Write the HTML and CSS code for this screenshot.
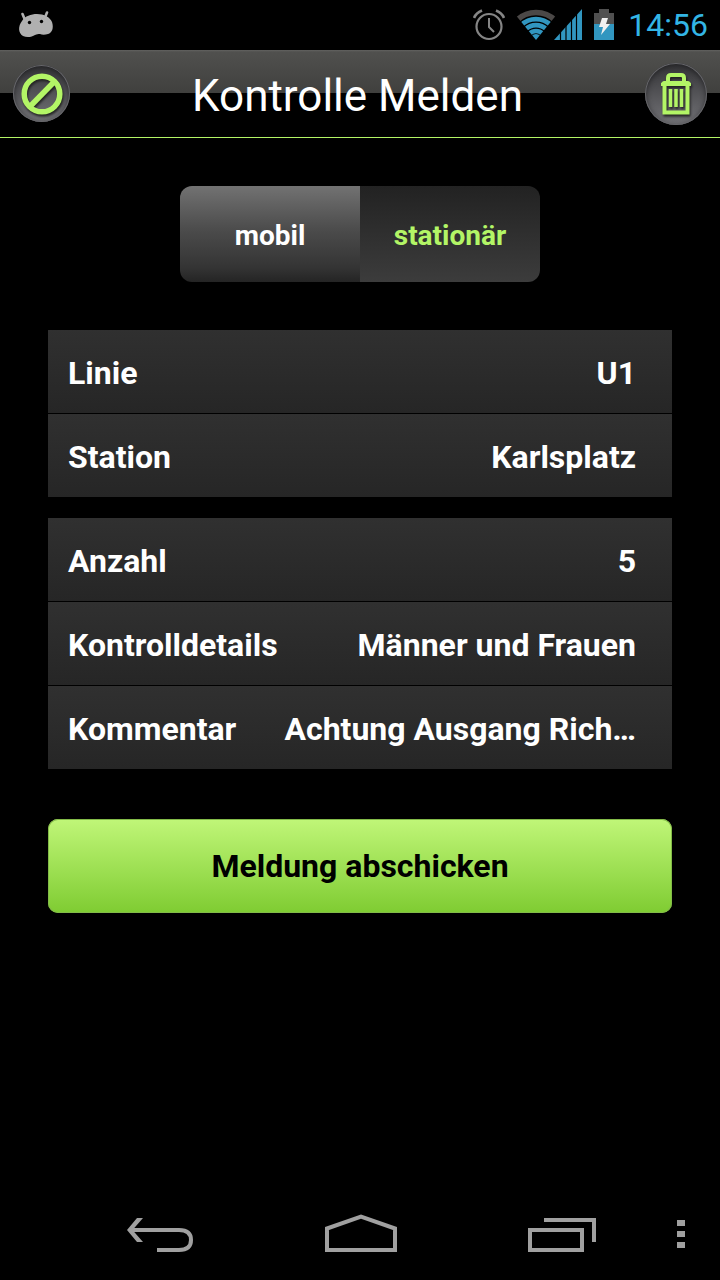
FILE: index.html
```html
<!DOCTYPE html>
<html lang="de">
<head>
<meta charset="utf-8">
<meta name="viewport" content="width=device-width, initial-scale=1">
<title>Kontrolle Melden</title>
<link rel="stylesheet" href="styles.css">
</head>
<body>
<div class="status">
  <svg class="droid" width="36" height="28" viewBox="0 0 36 28" aria-hidden="true">
    <path d="M4.500 3l2.500 6M29 1.500l-2 5" stroke="#b0b0b0" stroke-width="2.600" stroke-linecap="round"/>
    <path d="M4 10C7 5 13 3 19 3c7 0 13 3 15 8 2 6 0 11-4 12-3 1-6 1-8 0-2 0-3 0-5 1-3 2-8 3-12 1-5-3-5-10-1-15z" fill="#b0b0b0"/>
    <circle cx="11.500" cy="11.500" r="1.700"/><circle cx="23.500" cy="10.500" r="1.700"/>
  </svg>
  <div class="status-right">
    <svg class="alarm" width="32" height="32" viewBox="0 0 32 32" fill="none" stroke="#858585" aria-hidden="true">
      <circle cx="16" cy="17.500" r="12.500" stroke-width="2.200"/>
      <path d="M16 9v9l5 5" stroke-width="2"/>
      <path d="M1 9Q3 4 9 1.500M31 9Q29 4 23 1.500" stroke-width="2.600"/>
    </svg>
    <svg class="signal" width="68" height="32" viewBox="0 0 68 32" aria-hidden="true">
      <clipPath id="fan"><path d="M20 31L-2 4V-4H42V4z"/></clipPath>
      <g clip-path="url(#fan)" fill="none" stroke="#3196c0" stroke-width="4.600">
        <circle cx="20" cy="31" r="27.500" stroke="#4b4847" stroke-width="5.500"/>
        <circle cx="20" cy="31" r="20.900"/>
        <circle cx="20" cy="31" r="14.900"/>
        <circle cx="20" cy="31" r="9"/>
        <circle cx="20" cy="31" r="3" stroke-width="6"/>
      </g>
      <path d="M38 31L66 0V31z" fill="#3196c0"/>
      <path d="M44.500 18v13M50 12v19M55.500 7v24M60.500 2v29" stroke="#000" stroke-width="1.200"/>
    </svg>
    <svg class="battery" width="20" height="32" viewBox="0 0 20 32" aria-hidden="true">
      <path d="M0 4h5V0h10v4h5v11H0z" fill="#505050"/>
      <path d="M0 15h20v16H0z" fill="#3196c0"/>
      <path d="M8 9h6l-2 6h4L7 26l2-8H5z" fill="#f0f0f0"/>
    </svg>
    <time>14:56</time>
  </div>
</div>

<header class="bar">
  <button class="round cancel" type="button" aria-label="Abbrechen">
    <svg width="42" height="42" viewBox="0 0 42 42" fill="none" stroke="#b3f566" stroke-width="5.500" aria-hidden="true">
      <circle cx="21" cy="21" r="17.800"/><path d="M9.500 33L32.500 9.500"/>
    </svg>
  </button>
  <h1>Kontrolle Melden</h1>
  <button class="round delete" type="button" aria-label="Löschen">
    <svg width="32" height="42" viewBox="0 0 32 42" fill="none" stroke="#b3f566" aria-hidden="true">
      <path d="M8 8V5q0-3 3-3h10q3 0 3 3v3" stroke-width="4"/>
      <path d="M1 13v-3l3-2h24l3 2v3z" fill="#b3f566" stroke="none"/>
      <path d="M4.500 10.500h23V39.500h-23z" stroke-width="4"/>
      <path d="M10.500 16v18M16 16v18M21.500 16v18" stroke-width="3.500"/>
    </svg>
  </button>
</header>

<main>
  <form class="form">
    <div class="segment" role="radiogroup" aria-label="Art der Kontrolle">
      <input type="radio" name="art" id="mobil">
      <label for="mobil">mobil</label>
      <input type="radio" name="art" id="stationaer" checked>
      <label for="stationaer">stationär</label>
    </div>
    <div class="groups">
      <div class="group">
        <button class="row" type="button"><span>Linie</span><span class="value">U1</span></button>
        <button class="row" type="button"><span>Station</span><span class="value">Karlsplatz</span></button>
      </div>
      <div class="group">
        <button class="row" type="button"><span>Anzahl</span><span class="value">5</span></button>
        <button class="row" type="button"><span>Kontrolldetails</span><span class="value">Männer und Frauen</span></button>
        <button class="row" type="button"><span>Kommentar</span><span class="value">Achtung Ausgang Rich…</span></button>
      </div>
    </div>
    <button class="submit" type="submit">Meldung abschicken</button>
  </form>
</main>

<nav class="nav" aria-label="System">
  <button type="button" aria-label="Zurück">
    <svg width="68" height="40" viewBox="0 0 68 40" fill="none" stroke="#a0a0a0" stroke-width="4" aria-hidden="true">
      <path d="M5 16H53q12 0 12 10t-12 10H31"/>
      <path d="M11 4h6L6.500 16 17 28h-6L1 16z" fill="#a0a0a0" stroke="none"/>
    </svg>
  </button>
  <button type="button" aria-label="Startseite">
    <svg width="72" height="40" viewBox="0 0 72 40" fill="none" stroke="#a0a0a0" stroke-width="4" aria-hidden="true">
      <path d="M2 36V14.500L36 2.500 70 14.500V36z"/>
    </svg>
  </button>
  <button type="button" aria-label="Letzte Apps">
    <svg width="68" height="40" viewBox="0 0 68 40" fill="none" stroke="#a0a0a0" stroke-width="4" aria-hidden="true">
      <path d="M2 16h52v20H2zM16 6h50v22"/>
    </svg>
  </button>
  <button class="more" type="button" aria-label="Menü">
    <svg width="8" height="40" viewBox="0 0 8 40" fill="#a0a0a0" aria-hidden="true">
      <path d="M0 6h8v6H0zM0 17h8v6H0zM0 28h8v6H0z"/>
    </svg>
  </button>
</nav>
</body>
</html>
```
FILE: styles.css
```css
* {
  box-sizing: border-box;
}

body {
  margin: 0;
  min-height: 100vh;
  display: flex;
  flex-direction: column;
  background: #000;
  color: #fff;
  font-family: Roboto, "Noto Sans", sans-serif;
}

button {
  margin: 0;
  padding: 0;
  border: 0;
  background: none;
  color: inherit;
  font: inherit;
  cursor: pointer;
}

svg {
  display: block;
  flex: none;
}

.status {
  height: 50px;
  padding: 0 12px 0 18px;
  display: flex;
  align-items: center;
  justify-content: space-between;
}

.status-right {
  display: flex;
  align-items: center;
}

.signal {
  margin-left: 11px;
}

.battery {
  margin: 0 14px 0 10px;
}

time {
  color: #33b5e5;
  font-size: 32px;
  line-height: 50px;
}

.bar {
  height: 88px;
  padding: 0 13px;
  display: flex;
  align-items: center;
  justify-content: space-between;
  border-bottom: 1px solid #b3f566;
  background: linear-gradient(#626260 0, #50504e 2px, #40403e 43px, #000 43px);
}

h1 {
  margin: 0;
  padding-top: 4px;
  font-size: 44px;
  line-height: 52px;
  font-weight: 400;
}

.round {
  flex: none;
  display: grid;
  place-items: center;
  border-radius: 50%;
  background: linear-gradient(#343437, #737377);
  box-shadow: inset 0 0 0 1px #66666a, inset 0 2px 6px #202022;
}

.round svg {
  filter: drop-shadow(1px 2px 1px #222);
}

.cancel {
  width: 57px;
  height: 57px;
}

.delete {
  width: 62px;
  height: 62px;
}

main {
  flex: 1;
}

.form {
  padding: 48px;
  display: flex;
  flex-direction: column;
  gap: 48px;
}

.segment {
  align-self: center;
  width: 360px;
  max-width: 100%;
  display: grid;
  grid-template-columns: 1fr 1fr;
  position: relative;
  overflow: hidden;
  border-radius: 12px;
}

.segment input {
  position: absolute;
  opacity: 0;
}

.segment label {
  padding: 34px 0 30px;
  text-align: center;
  font-size: 28px;
  line-height: 32px;
  font-weight: 700;
  background: linear-gradient(#727272, #4c4c4c 45%, #343434 85%, #242424);
  cursor: pointer;
}

.segment input:checked + label {
  color: #b3f566;
  background: linear-gradient(#222, #3c3c3c);
}

.groups {
  display: grid;
  gap: 21px;
  padding-bottom: 2px;
}

.group {
  display: grid;
  gap: 1px;
}

.row {
  min-width: 0;
  padding: 23px 36px 20px 20px;
  display: flex;
  justify-content: space-between;
  gap: 20px;
  background: linear-gradient(#303030, #262626);
  font-size: 32px;
  line-height: 40px;
  font-weight: 700;
  text-align: left;
}

.value {
  min-width: 0;
  overflow: hidden;
  text-overflow: ellipsis;
  white-space: nowrap;
}

.submit {
  padding: 27px 20px;
  border-radius: 10px;
  background: linear-gradient(#c0f678, #7fcc32);
  box-shadow: inset 0 0 0 1px #83bb48;
  color: #000;
  font-size: 32px;
  line-height: 40px;
  font-weight: 700;
}

.nav {
  height: 96px;
  padding: 4px 35px 0 126px;
  display: flex;
  align-items: center;
  justify-content: space-between;
}

.nav .more {
  margin-left: -50px;
}
```
